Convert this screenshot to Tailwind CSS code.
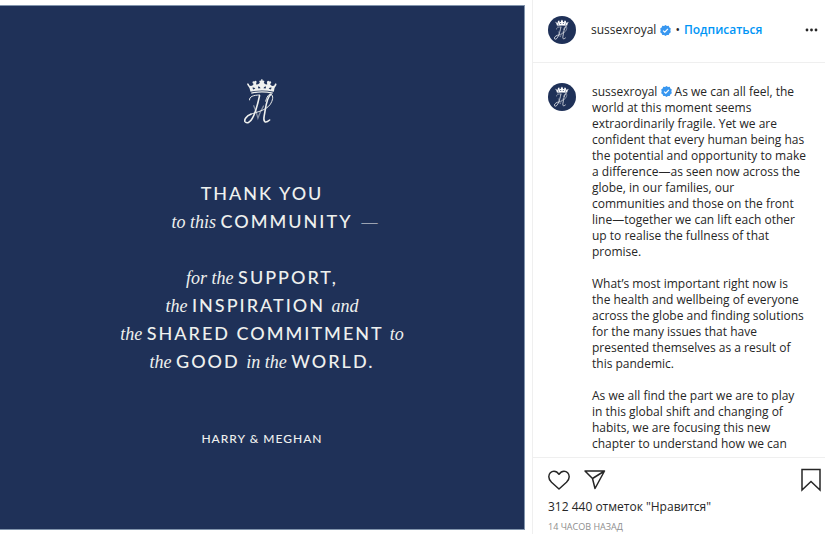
<!DOCTYPE html>
<html lang="ru">
<head>
  <meta charset="UTF-8" />
  <meta name="viewport" content="width=device-width, initial-scale=1" />
  <title>sussexroyal</title>
  <script src="https://cdn.jsdelivr.net/npm/@tailwindcss/browser@4"></script>
</head>
<body class="bg-white font-['Open_Sans','Noto_Sans',sans-serif] text-xs text-[#262626]">

  <!-- shared symbols -->
  <svg class="hidden" xmlns="http://www.w3.org/2000/svg">
    <symbol id="monogram" viewBox="60 40 111 147">
      <g fill="currentColor">
        <path d="M70 60 Q69 57 72 56 Q76 57 76 62 Q84 67 90 58 Q86 56 86 52 Q88 48 92 50 Q96 46 99 51 Q98 55 97 59 Q104 61 109 54 Q106 51 108 48 L113 47 L113 43 L117 43 L117 47 L122 48 Q124 51 121 54 Q125 61 132 59 Q130 55 131 51 Q134 46 138 50 Q143 48 144 53 Q143 57 140 58 Q146 67 154 62 Q154 57 158 56 Q162 58 159 63 Q153 69 152 82 Q115 74 80 82 Q78 68 70 60 Z M86 69 Q91 67 95 73 L88 75 Z M103 66 Q109 64 111 71 L104 72 Z M120 71 Q122 64 128 66 L127 72 Z M136 73 Q140 67 145 69 L143 75 Z" fill-rule="evenodd" />
        <path d="M82 84 Q115 76 149 84 L148 88 Q115 80 83 88 Z" />
      </g>
      <g fill="none" stroke="currentColor" stroke-linecap="round">
        <path stroke-width="5" d="M108 94 C104 112 97 145 86 163 C79 177 68 181 63 174 C60 167 68 156 81 151" />
        <path stroke-width="3" d="M77 107 C76 97 89 92 108 92 M81 151 C98 145 128 139 140 122 C149 109 152 94 143 90 C136 88 130 98 127 111" />
        <path stroke-width="5" d="M143 90 C129 98 127 132 122 158 C119 174 125 181 139 169" />
        <path stroke-width="4" d="M90 125 Q98 144 103 163 Q110 143 120 126" opacity=".5" />
      </g>
    </symbol>
    <symbol id="verified" viewBox="0 0 12 12">
      <path fill="#3897f0" d="M6 0 L7.6 1 L9.5 .9 L10.2 2.6 L11.8 3.7 L11.3 5.8 L11.8 7.8 L10.3 9 L9.5 10.8 L7.5 10.8 L6 12 L4.5 10.8 L2.5 10.8 L1.7 9 L.2 7.8 L.7 5.8 L.2 3.7 L1.8 2.6 L2.5 .9 L4.4 1 Z" />
      <path fill="none" stroke="#fff" stroke-width="1.3" d="M3.4 6.1 L5.2 7.8 L8.6 4.2" />
    </symbol>
  </svg>

  <article class="flex h-screen overflow-hidden">
    <div class="min-w-0 flex-1 pt-[5px] pr-[7px]">
      <figure class="flex aspect-square flex-col items-center border-y border-r border-[#8295ad] bg-[#1f3158] pt-[72px] text-center text-[#eef0ee]">
        <svg class="h-12 w-9" role="img" aria-label="Monogram"><use href="#monogram" /></svg>
        <div class="mt-[53px] font-['Lato',sans-serif] text-lg leading-7 font-medium tracking-[2px] whitespace-nowrap [&_i]:font-['Liberation_Serif',serif] [&_i]:leading-none [&_i]:font-normal [&_i]:tracking-normal">
          <p>THANK YOU</p>
          <p><i>to this </i>COMMUNITY<span class="inline-block w-0 leading-none opacity-60"><i>&nbsp; —</i></span></p>
          <p class="mt-7"><i>for the </i>SUPPORT,</p>
          <p><i>the </i>INSPIRATION <i>and</i></p>
          <p><i>the </i>SHARED COMMITMENT <i>to</i></p>
          <p><i>the </i>GOOD <i>in the </i>WORLD.</p>
        </div>
        <figcaption class="mt-14 font-['Lato',sans-serif] text-xs leading-4 font-medium tracking-[1px]">HARRY &amp; MEGHAN</figcaption>
      </figure>
    </div>

    <aside class="flex w-[293px] shrink-0 flex-col border-l border-[#efefef]">
      <header class="flex h-[63px] shrink-0 items-center border-b border-[#efefef] pr-[7px] pb-[2px] pl-[15px]">
        <a href="#" class="flex size-7 items-center justify-center rounded-full bg-[#1f3158] text-white" aria-label="sussexroyal">
          <svg class="h-[22px] w-4"><use href="#monogram" /></svg>
        </a>
        <a href="#" class="ml-[15px] font-medium">sussexroyal</a>
        <svg class="ml-1 size-[11px]"><use href="#verified" /></svg>
        <span class="mx-1">•</span>
        <button class="font-semibold text-[#0095f6]">Подписаться</button>
        <button class="ml-auto" aria-label="Ещё">
          <svg class="h-3 w-[13px]" viewBox="0 0 13 12" fill="currentColor"><circle cx="2" cy="6" r="1.4" /><circle cx="6.5" cy="6" r="1.4" /><circle cx="11" cy="6" r="1.4" /></svg>
        </button>
      </header>

      <div class="flex min-h-0 flex-1 overflow-hidden pt-5 pr-[18px] pl-[15px]">
        <a href="#" class="flex size-7 shrink-0 items-center justify-center rounded-full bg-[#1f3158] text-white" aria-label="sussexroyal">
          <svg class="h-[22px] w-4"><use href="#monogram" /></svg>
        </a>
        <div class="ml-4 space-y-4 pt-px leading-4">
          <p><a href="#" class="font-medium">sussexroyal</a> <svg class="inline size-[11px] align-[-1px]"><use href="#verified" /></svg> As we can all feel, the world at this moment seems extraordinarily fragile. Yet we are confident that every human being has the potential and opportunity to make a difference—as seen now across the globe, in our families, our communities and those on the front line—together we can lift each other up to realise the fullness of that promise.</p>
          <p>What’s most important right now is the health and wellbeing of everyone across the globe and finding solutions for the many issues that have presented themselves as a result of this pandemic.</p>
          <p>As we all find the part we are to play in this global shift and changing of habits, we are focusing this new chapter to understand how we can</p>
        </div>
      </div>

      <footer class="h-[77px] shrink-0 border-t border-[#efefef] pt-[10px] pr-1 pl-[15px]">
        <div class="flex items-center">
          <button aria-label="Нравится">
            <svg class="-ml-px size-6" viewBox="0 0 24 24" fill="none" stroke="currentColor" stroke-width="1.5" stroke-linejoin="round"><path d="M12 21 L4.5 14.3 C2.8 12.6 1.8 11 1.8 8.8 C1.8 5.5 4.2 3.2 7 3.2 C9.5 3.2 10.8 4.5 12 6.3 C13.2 4.5 14.5 3.2 17 3.2 C19.8 3.2 22.2 5.5 22.2 8.8 C22.2 11 21.2 12.6 19.5 14.3 Z" /></svg>
          </button>
          <button class="ml-3" aria-label="Поделиться">
            <svg class="size-6" viewBox="0 0 24 24" fill="none" stroke="currentColor" stroke-width="1.5" stroke-linejoin="round"><path d="M2 3 H21.5 L12 20.5 L9.5 10.5 Z M9.5 10.5 L21.5 3" /></svg>
          </button>
          <button class="ml-auto" aria-label="Сохранить">
            <svg class="h-6 w-5" viewBox="0 0 20 24" fill="none" stroke="currentColor" stroke-width="1.5"><path d="M1 1.5 H19 V22 L10 13.5 L1 22 Z" /></svg>
          </button>
        </div>
        <a href="#" class="mt-[5px] block leading-5 font-medium">312 440 отметок "Нравится"</a>
        <time class="mt-1 block text-[9px] leading-3 text-[#8e8e8e]">14 ЧАСОВ НАЗАД</time>
      </footer>
    </aside>
  </article>

</body>
</html>
